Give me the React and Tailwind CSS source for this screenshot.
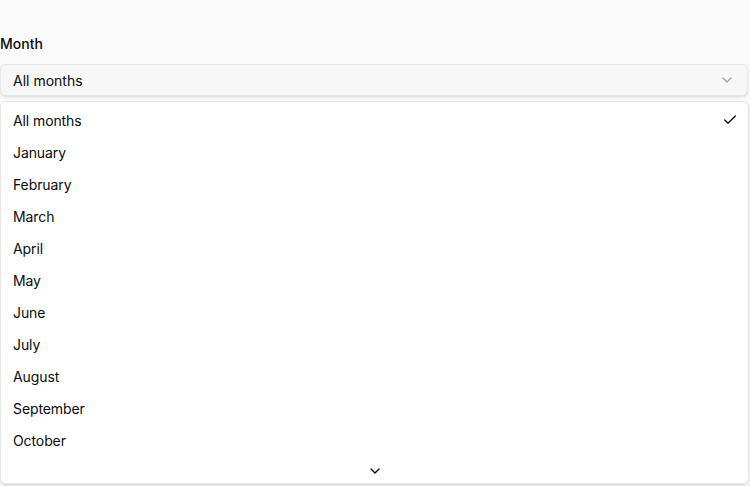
import React from 'react'

const months = ['All months','January','February','March','April','May','June','July','August','September','October']

function Chevron({ className }){
  return (
    <svg viewBox="0 0 24 24" fill="none" stroke="currentColor" strokeWidth="2" strokeLinecap="round" strokeLinejoin="round" className={className}>
      <path d="m6 9 6 6 6-6" />
    </svg>
  )
}

export default function App(){
  return (
    <div className="h-[486px] w-[750px] overflow-hidden bg-[#fafafa] text-[#0a0a0a]" style={{ fontFamily: 'Inter, "Noto Sans", sans-serif' }}>
      <div className="pt-[34px]">
        <div className="text-[14px] font-medium leading-5">Month</div>
        <div className="mt-[10px] mr-[2px] h-[32px] flex items-center justify-between rounded-md border border-[#e7e7e7] bg-[#f7f7f7] pl-[12px] pr-[12px] text-[14px] shadow-sm">
          <span>All months</span>
          <Chevron className="h-4 w-4 text-[#a3a3a3]" />
        </div>
        <div className="mt-[5px] mr-[1px] h-[383px] rounded-md border border-[#e5e5e5] bg-white shadow-md flex flex-col pt-[2px]">
          {months.map((m, i) => (
            <div key={m} className="h-[32px] flex items-center justify-between pl-[12px] pr-[10px] text-[14px] tracking-[-0.1px]">
              <span>{m}</span>
              {i === 0 && (
                <svg viewBox="0 0 24 24" fill="none" stroke="currentColor" strokeWidth="2" strokeLinecap="round" strokeLinejoin="round" className="h-4 w-4">
                  <path d="M20 6 9 17l-5-5" />
                </svg>
              )}
            </div>
          ))}
          <div className="flex justify-center pt-[7px]">
            <Chevron className="h-4 w-4" />
          </div>
        </div>
      </div>
    </div>
  )
}
